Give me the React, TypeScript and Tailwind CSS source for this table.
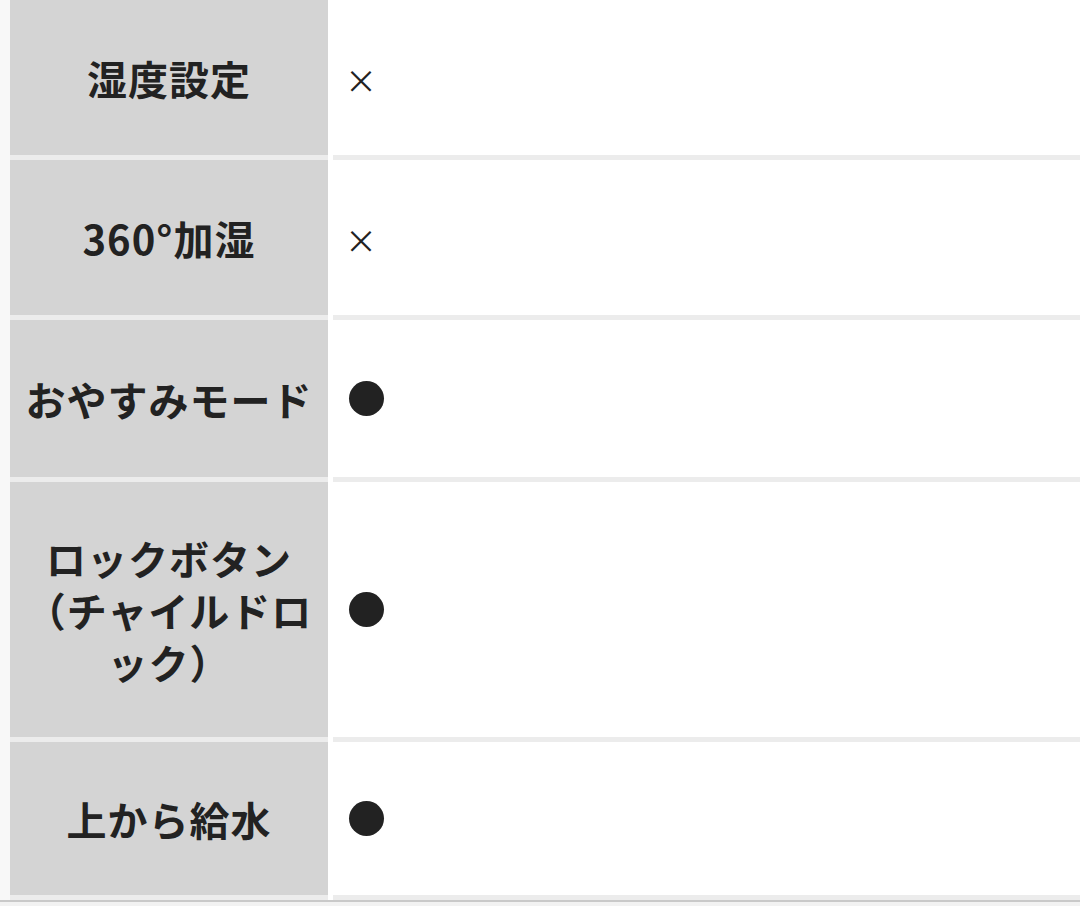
const rows: { label: string; mark: '×' | '●'; h: string }[] = [
  { label: '湿度設定', mark: '×', h: 'h-[160px]' },
  { label: '360°加湿', mark: '×', h: 'h-[160px]' },
  { label: 'おやすみモード', mark: '●', h: 'h-[162px]' },
  { label: 'ロックボタン（チャイルドロック）', mark: '●', h: 'h-[260px]' },
  { label: '上から給水', mark: '●', h: 'h-[158px]' },
];

export default function App() {
  return (
    <div
      className="min-h-[906px] bg-white text-[#222]"
      style={{ fontFamily: '"Noto Sans CJK JP", "Noto Sans", sans-serif' }}
    >
      <div className="flex bg-[#f8f8f8] pl-[10px]">
        <div className="flex-1 bg-white">
          {rows.map((row) => (
            <div key={row.label} className={`flex gap-[5px] bg-white ${row.h}`}>
              <div className="flex w-[318px] shrink-0 items-center justify-center border-b-[5px] border-[#ececec] bg-[#d4d4d4] px-[6px] pt-[1px]">
                <span className="text-center text-[40px] font-bold leading-[52px] tracking-[1px]">{row.label}</span>
              </div>
              <div className="flex flex-1 items-center border-b-[5px] border-[#ececec] pl-[16px]">
                {row.mark === '×' ? (
                  <span className="-ml-[4px] pt-[2px] text-[32px] leading-none">×</span>
                ) : (
                  <span className="block h-[35px] w-[35px] rounded-full bg-[#222]" />
                )}
              </div>
            </div>
          ))}
        </div>
      </div>
      <div className="h-[6px] border-t-[2px] border-[#c9c9c9] bg-[#f2f2f2]" />
    </div>
  );
}
